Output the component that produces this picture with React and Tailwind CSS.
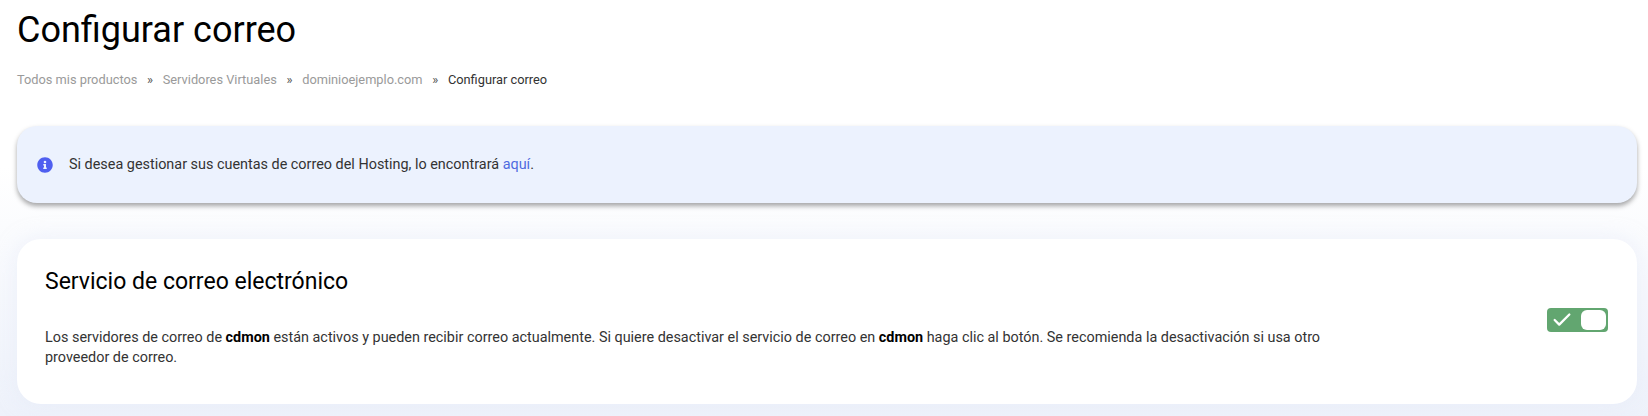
import { Check } from 'lucide-react'

const crumbs = ['Todos mis productos', 'Servidores Virtuales', 'dominioejemplo.com']

const InfoIcon = () => (
  <svg viewBox="0 0 512 512" className="w-[16px] h-[16px] shrink-0 fill-[#4f5ff0]">
    <path d="M256 8C119 8 8 119 8 256s111 248 248 248 248-111 248-248S393 8 256 8zm0 110a42 42 0 1 1 0 84 42 42 0 0 1 0-84zm56 254c0 7-5 12-12 12h-88c-7 0-12-5-12-12v-24c0-7 5-12 12-12h12v-64h-12c-7 0-12-5-12-12v-24c0-7 5-12 12-12h64c7 0 12 5 12 12v100h12c7 0 12 5 12 12v24z" />
  </svg>
)

const App = () => {
  return (
    <div className="h-[416px] overflow-hidden pl-[17px] pr-[11px] bg-gradient-to-b from-white from-40% to-[#eef2fb] font-['Roboto',sans-serif]">
      <h1 className="text-[36px] leading-[40px] pt-[10px] text-black">Configurar correo</h1>

      {/* Breadcrumb */}
      <div className="flex items-center mt-[21px] h-[18px] text-[12.8px] text-[#9a9a9a]">
        {crumbs.map((c) => (
          <span key={c} className="flex items-center">
            <span>{c}</span>
            <span className="mx-[9.7px] text-[#555]">»</span>
          </span>
        ))}
        <span className="text-[#333]">Configurar correo</span>
      </div>

      {/* Info box */}
      <div className="mt-[37px] h-[77px] flex items-center gap-[16px] pl-[20px] rounded-[20px] bg-[#ecf2fe] shadow-[0_3px_5px_rgba(0,0,0,0.35)] text-[14.4px] text-[#333]">
        <InfoIcon />
        <p>
          Si desea gestionar sus cuentas de correo del Hosting, lo encontrará{' '}
          <span className="text-[#4f6ae0]">aquí</span>.
        </p>
      </div>

      {/* Mail service card */}
      <div className="mt-[36px] h-[165px] flex items-start justify-between pl-[28px] pr-[29px] pt-[29px] rounded-[24px] bg-white shadow-[0_0_20px_rgba(225,232,248,0.5)]">
        <div className="w-[1290px]">
          <h2 className="text-[23px] leading-[28px] text-black">Servicio de correo electrónico</h2>
          <p className="mt-[32px] text-[14.4px] leading-[20px] text-[#333]">
            Los servidores de correo de <b className="text-black">cdmon</b> están activos y pueden recibir correo actualmente. Si quiere desactivar el servicio de correo en <b className="text-black">cdmon</b> haga clic al botón. Se recomienda la desactivación si usa otro proveedor de correo.
          </p>
        </div>
        <div className="mt-[40px] w-[61px] h-[24px] flex items-center justify-between pl-[4px] pr-[2px] rounded-[4px] bg-[#62a670]">
          <Check className="w-[22px] h-[22px] text-white" strokeWidth={2.5} />
          <span className="w-[25px] h-[20px] rounded-[6px] bg-white" />
        </div>
      </div>
    </div>
  )
}

export default App
